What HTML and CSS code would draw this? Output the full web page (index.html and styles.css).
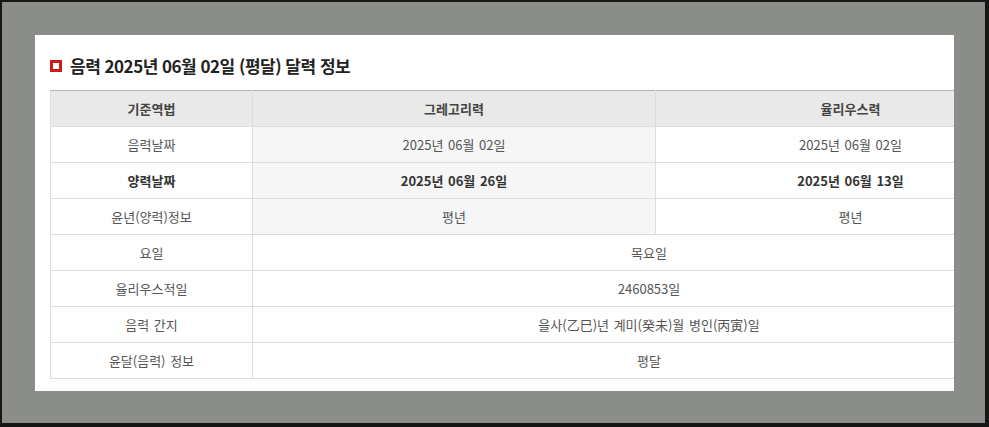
FILE: index.html
```html
<!DOCTYPE html>
<html lang="ko">
<head>
<meta charset="utf-8">
<title>음력 달력 정보</title>
<link rel="stylesheet" href="styles.css">
</head>
<body>
<div class="frame">
  <section class="panel">
    <h2 class="title"><span class="title-icon"></span>음력 2025년 06월 02일 (평달) 달력 정보</h2>
    <table class="cal">
      <colgroup>
        <col class="c1"><col class="c2"><col class="c3">
      </colgroup>
      <thead>
        <tr><th>기준역법</th><th>그레고리력</th><th>율리우스력</th></tr>
      </thead>
      <tbody>
        <tr><td>음력날짜</td><td class="shade">2025년 06월 02일</td><td>2025년 06월 02일</td></tr>
        <tr class="strong"><td>양력날짜</td><td class="shade">2025년 06월 26일</td><td>2025년 06월 13일</td></tr>
        <tr><td>윤년(양력)정보</td><td class="shade">평년</td><td>평년</td></tr>
        <tr><td>요일</td><td colspan="2">목요일</td></tr>
        <tr><td>율리우스적일</td><td colspan="2">2460853일</td></tr>
        <tr><td>음력 간지</td><td colspan="2">을사(乙巳)년 계미(癸未)월 병인(丙寅)일</td></tr>
        <tr><td>윤달(음력) 정보</td><td colspan="2">평달</td></tr>
      </tbody>
    </table>
  </section>
</div>
</body>
</html>
```

FILE: styles.css
```css
html, body {
  margin: 0;
  padding: 0;
  background: #111;
}
body {
  width: 989px;
  height: 427px;
  overflow: hidden;
  font-family: "Noto Sans CJK KR", "Noto Sans", sans-serif;
}
.frame {
  box-sizing: border-box;
  width: 989px;
  height: 427px;
  border-style: solid;
  border-color: #161616;
  border-width: 2px 4px 4px 2px;
  background: #8a8d88;
  padding: 33px 0 0 33px;
}
.panel {
  box-sizing: border-box;
  width: 919px;
  height: 356px;
  background: #fff;
  padding: 20px 0 0 15px;
  overflow: hidden;
}
.title {
  display: flex;
  align-items: center;
  margin: 0 0 13px 0;
  height: 22px;
  font-size: 17px;
  line-height: 22px;
  font-weight: 700;
  letter-spacing: -0.5px;
  color: #222;
  white-space: nowrap;
}
.title-icon {
  box-sizing: border-box;
  width: 12px;
  height: 12px;
  border: 3px solid #cc1d1d;
  background: #fff;
  margin: 0 8px 0 0;
  flex: none;
}
.cal {
  width: 995px;
  table-layout: fixed;
  border-collapse: collapse;
  border-top: 1px solid #b4b4b4;
  font-size: 13px;
  color: #555;
}
.c1 { width: 202px; }
.c2 { width: 403px; }
.c3 { width: 390px; }
.cal th, .cal td {
  height: 35px;
  padding: 0;
  border: 1px solid #dddddd;
  text-align: center;
  vertical-align: middle;
  white-space: nowrap;
  word-spacing: 1px;
}
.cal thead th {
  border-top: 1px solid #b4b4b4;
}
.cal th {
  background: #e9e9e9;
  font-weight: 700;
  color: #444;
}
.cal td.shade {
  background: #f6f6f6;
}
.cal tr.strong td {
  font-weight: 700;
  color: #333;
}
```
